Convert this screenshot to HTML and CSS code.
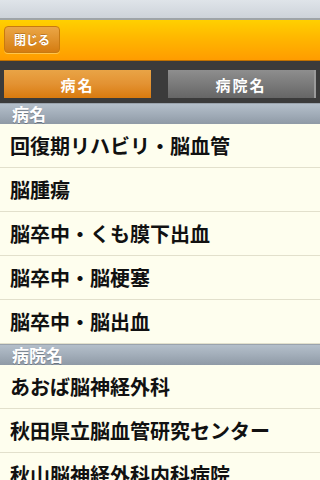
FILE: index.html
```html
<!DOCTYPE html>
<html lang="ja">
<head>
  <meta charset="UTF-8" />
  <meta name="viewport" content="width=device-width, initial-scale=1.0"/>
  <title>病名・病院名</title>
  <link rel="stylesheet" href="styles.css">
</head>
<body>
  <div class="status-bar"></div>

  <div class="nav-bar">
    <button class="close-btn">閉じる</button>
  </div>

  <div class="tab-bar">
    <div class="tab active">病名</div>
    <div class="tab">病院名</div>
  </div>

  <div class="list">
    <div class="section-head">病名</div>
    <div class="row">回復期リハビリ・脳血管</div>
    <div class="row">脳腫瘍</div>
    <div class="row">脳卒中・くも膜下出血</div>
    <div class="row">脳卒中・脳梗塞</div>
    <div class="row">脳卒中・脳出血</div>

    <div class="section-head">病院名</div>
    <div class="row">あおば脳神経外科</div>
    <div class="row">秋田県立脳血管研究センター</div>
    <div class="row">秋山脳神経外科内科病院</div>
  </div>
</body>
</html>
```

FILE: styles.css
```css
body {
  margin: 0;
  font-family: "Noto Sans CJK JP", "Liberation Sans", sans-serif;
  background-color: #fefeee;
  overflow: hidden;
  height: 480px;
}

.status-bar {
  height: 18px;
  background: linear-gradient(#dfe4e9, #cdd3da);
  border-bottom: 2px solid #9ea4a8;
}

.nav-bar {
  height: 40px;
  background: linear-gradient(#ffd000, #ffb400 50%, #ff9c00);
  border-bottom: 1px solid #c07000;
  display: flex;
  align-items: center;
  padding: 0 4px;
}

.close-btn {
  width: 56px;
  height: 27px;
  margin-top: -1px;
  border: 1px solid #c77a10;
  border-radius: 4px;
  background: linear-gradient(#eba646, #e0922c 50%, #d57c10);
  color: #fff;
  font-family: inherit;
  font-size: 12px;
  font-weight: bold;
  text-shadow: 0 -1px 0 rgba(120, 60, 0, 0.4);
  box-shadow: 0 1px 0 rgba(255, 230, 150, 0.5);
  padding: 0;
}

.tab-bar {
  height: 42px;
  background-color: #3b3b3b;
  display: grid;
  grid-template-columns: 147px 148px;
  justify-content: space-between;
  align-items: center;
  padding: 0 4px;
}

.tab {
  height: 28px;
  margin-top: 4px;
  display: flex;
  justify-content: center;
  align-items: center;
  color: #fff;
  font-size: 15px;
  font-weight: bold;
  letter-spacing: 2px;
  background: linear-gradient(#8e8e8e, #7a7a7a 50%, #666);
  border-right: 2px solid #9a9a9a;
  box-sizing: border-box;
}

.tab.active {
  background: linear-gradient(#e9a446, #e39232 50%, #d97a0e);
  border-right: none;
}

.section-head {
  height: 20px;
  line-height: 20px;
  padding-left: 12px;
  color: #fff;
  font-size: 17px;
  font-weight: bold;
  text-shadow: 0 1px 0 rgba(80, 90, 100, 0.6);
  background: linear-gradient(#b4bfca, #a2adb9 50%, #8f9aa6);
  border-top: 1px solid #9aa3ad;
}

.row {
  height: 43px;
  line-height: 43px;
  padding-left: 10px;
  font-size: 20px;
  font-weight: bold;
  color: #111;
  border-bottom: 1px solid #e2e0cc;
  white-space: nowrap;
}
```
